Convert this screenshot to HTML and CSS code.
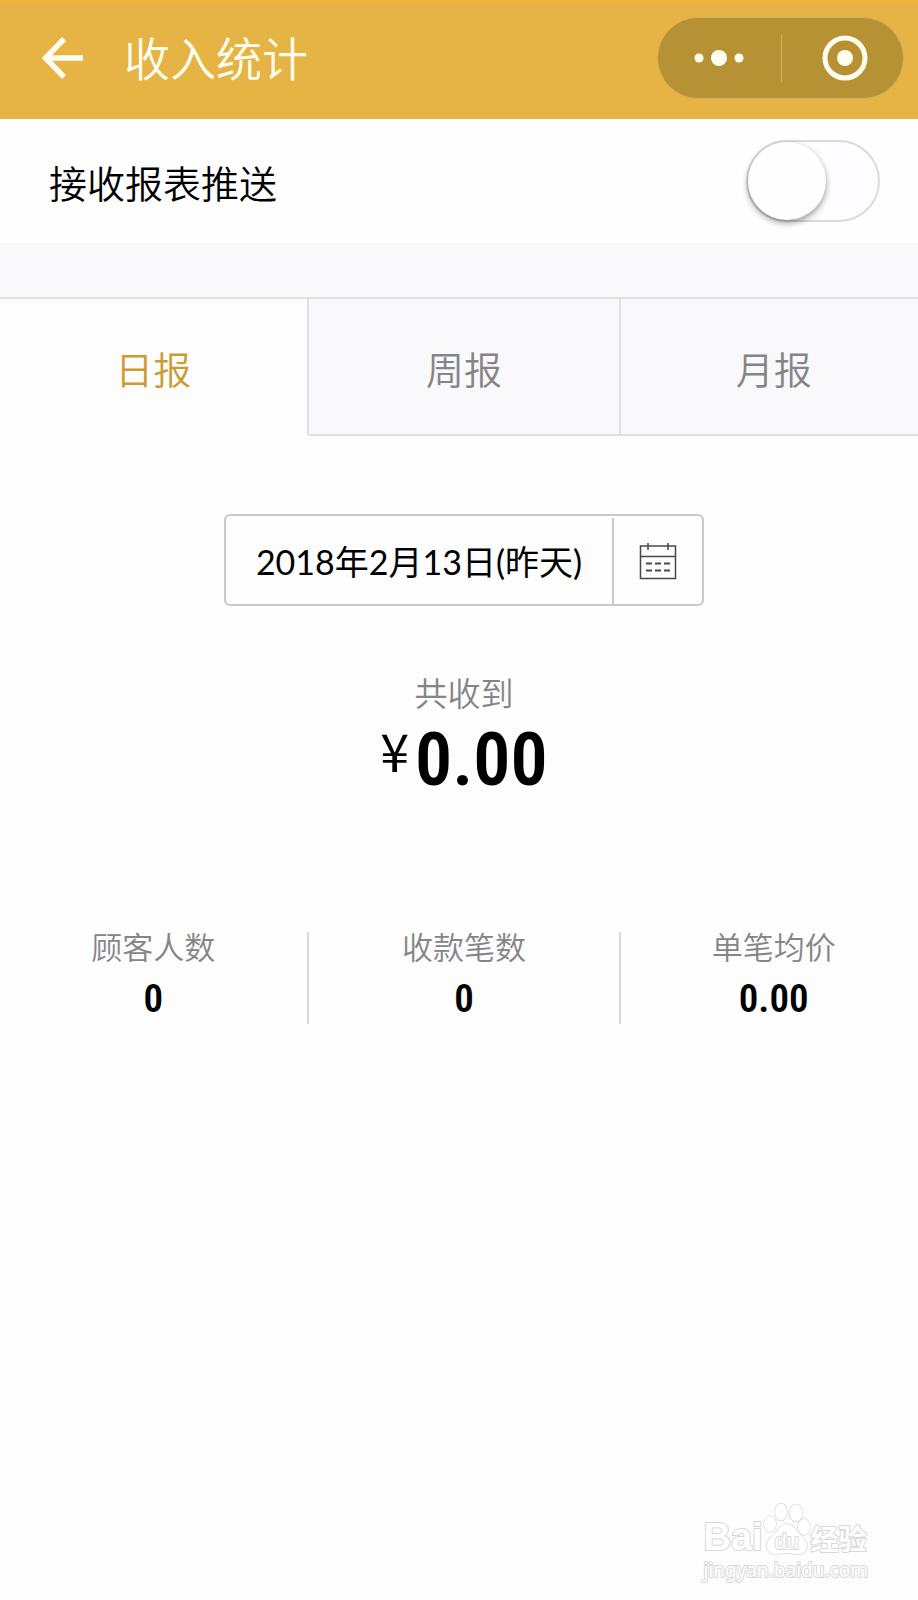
FILE: index.html
```
<!DOCTYPE html>
<html lang="zh-CN">
<head>
    <meta charset="UTF-8">
    <meta name="viewport" content="width=device-width, initial-scale=1.0">
    <title>收入统计</title>
    <link rel="stylesheet" href="styles.css">
</head>
<body>
    <header class="navbar">
        <button class="back" type="button" aria-label="返回">
            <svg width="42" height="42" viewBox="0 0 42 42" fill="none" stroke="#fffdf0" stroke-width="5.5">
                <path d="M22 2L3.500 21l18.500 19M3 21h38"/>
            </svg>
        </button>
        <h1>收入统计</h1>
        <div class="capsule">
            <button type="button" aria-label="更多">
                <svg width="50" height="18" viewBox="0 0 50 18" fill="#fffdf0">
                    <circle cx="5" cy="9" r="4.5"/>
                    <circle cx="25" cy="9" r="8"/>
                    <circle cx="45" cy="9" r="4.5"/>
                </svg>
            </button>
            <button type="button" aria-label="关闭">
                <svg width="46" height="46" viewBox="0 0 46 46">
                    <circle cx="23" cy="23" r="20" fill="none" stroke="#fffdf0" stroke-width="5"/>
                    <circle cx="23" cy="23" r="8" fill="#fffdf0"/>
                </svg>
            </button>
        </div>
    </header>

    <div class="push">
        <label for="pushSwitch">接收报表推送</label>
        <input type="checkbox" id="pushSwitch" class="switch">
    </div>

    <main class="report">
        <nav class="tabs">
            <button type="button" class="tab active">日报</button>
            <button type="button" class="tab">周报</button>
            <button type="button" class="tab">月报</button>
        </nav>

        <div class="datePicker">
            <input type="text" value="2018年2月13日(昨天)" aria-label="日期" readonly>
            <button type="button" aria-label="选择日期">
                <svg width="38" height="38" viewBox="0 0 38 38" fill="none" stroke="#48484c" stroke-width="1.5">
                    <path d="M1.500 4h35v32.500h-35zM1.500 14.500h35M9 1v7M29 1v7"/>
                    <path d="M7 21.500h6M16 21.500h6M25 21.500h6M7 28.500h6M16 28.500h6M25 28.500h6" stroke-width="2"/>
                </svg>
            </button>
        </div>

        <section class="total">
            <h2>共收到</h2>
            <p><span class="yen">¥</span><span class="amount">0.00</span></p>
        </section>

        <dl class="stats">
            <div>
                <dt>顾客人数</dt>
                <dd>0</dd>
            </div>
            <div>
                <dt>收款笔数</dt>
                <dd>0</dd>
            </div>
            <div>
                <dt>单笔均价</dt>
                <dd>0.00</dd>
            </div>
        </dl>
    </main>

    <div class="watermark">
        <div class="brand">
            <span class="bai">Bai</span>
            <span class="paw">
                <svg width="48" height="54" viewBox="0 0 48 54" fill="#fff" stroke="#d8d8d8" stroke-width="1.5">
                    <ellipse cx="7" cy="22" rx="6" ry="8"/>
                    <ellipse cx="18" cy="10" rx="6" ry="8.5"/>
                    <ellipse cx="33" cy="11" rx="6.5" ry="8.5"/>
                    <ellipse cx="41" cy="25" rx="6" ry="8"/>
                    <path d="M24 22c-5 0-8 4-11 8-4 5-10 8-9 15 1 6 6 8 11 7 6-1 12-1 18 0 6 1 11-2 11-8 0-6-5-9-9-14-3-4-6-8-11-8z"/>
                </svg>
                <span class="du">du</span>
            </span>
            <span class="exp">经验</span>
        </div>
        <div class="site">jingyan.baidu.com</div>
    </div>
</body>
</html>
```

FILE: styles.css
```
* {
    box-sizing: border-box;
}
body {
    font-family: Lato, "Noto Sans CJK SC", sans-serif;
    font-weight: 350;
    background-color: #fdfdfd;
    color: #000;
    min-height: 100vh;
    margin: 0;
    overflow-x: hidden;
    position: relative;
}
button {
    background: none;
    border: none;
    color: inherit;
    cursor: pointer;
    font: inherit;
    padding: 0;
}
svg {
    display: block;
}
h1, h2, p, dl, dd {
    font-weight: inherit;
    margin: 0;
}

/* top bar */
.navbar {
    background-color: #e6b445;
    border-top: 4px solid #f0b23c;
    color: #fffdf0;
    display: flex;
    align-items: center;
    height: 119px;
    padding: 0 14px 8px 42px;
}
.navbar h1 {
    font-size: 46px;
    line-height: 60px;
    margin-left: 40px;
    padding-top: 2px;
}
.capsule {
    background-color: #b79235;
    border: 1px solid #d3b062;
    border-radius: 41px;
    display: flex;
    align-items: center;
    height: 82px;
    margin-left: auto;
    width: 247px;
}
.capsule button {
    display: flex;
    align-items: center;
    justify-content: center;
    height: 48px;
    width: 50%;
}
.capsule button + button {
    border-left: 1px solid #cfae62;
    padding-left: 6px;
}

/* push switch */
.push {
    background-color: #fefefe;
    display: flex;
    align-items: center;
    justify-content: space-between;
    height: 124px;
    padding: 0 38px 0 49px;
}
.push label {
    font-size: 38px;
    line-height: 54px;
    padding-top: 4px;
}
.switch {
    appearance: none;
    background-color: #fdfcfe;
    border: 2px solid #dbdada;
    border-radius: 42px;
    cursor: pointer;
    height: 82px;
    margin: 0;
    width: 134px;
}
.switch::before {
    background-color: #fefefe;
    border-radius: 50%;
    box-shadow: 0 3px 6px rgba(0, 0, 0, 0.4);
    content: "";
    display: block;
    height: 78px;
    width: 78px;
}
.switch:checked {
    background-color: #e6b445;
}
.switch:checked::before {
    margin-left: auto;
}

/* report */
.report {
    width: calc(100% + 10px);
}
.tabs {
    background-color: #f9f8fb;
    display: grid;
    grid-template-columns: 309fr 313fr 307fr;
    padding-top: 54px;
}
.tab {
    border: 2px solid #e0dfe2;
    border-left: none;
    color: #858587;
    font-size: 38px;
    height: 139px;
    line-height: 54px;
    padding-top: 4px;
}
.tab.active {
    background-color: #fdfdfd;
    border-bottom-color: #fdfdfd;
    color: #cc9c31;
}
.datePicker {
    border: 2px solid #c9c8cb;
    border-radius: 6px;
    display: flex;
    height: 92px;
    margin: 78px auto 0;
    width: 480px;
}
.datePicker input {
    background: none;
    border: none;
    color: #000;
    flex: 1;
    font: inherit;
    font-size: 34px;
    font-weight: 400;
    min-width: 0;
    outline: none;
    padding: 0;
    text-align: center;
}
.datePicker button {
    border-left: 2px solid #c9c8cb;
    display: flex;
    align-items: center;
    justify-content: center;
    margin-top: 2px;
    width: 90px;
}
.total {
    margin-top: 64px;
    text-align: center;
}
.total h2 {
    color: #858587;
    font-size: 33px;
    line-height: 46px;
}
.total p {
    display: flex;
    align-items: flex-start;
    justify-content: center;
    gap: 6px;
}
.yen {
    font-family: "Noto Sans CJK SC", sans-serif;
    font-size: 52px;
    font-weight: 400;
    line-height: 68px;
}
.amount {
    font-family: "Roboto Condensed", Roboto, sans-serif;
    font-size: 74px;
    font-weight: 600;
    line-height: 88px;
}
.stats {
    display: grid;
    grid-template-columns: 309fr 313fr 307fr;
    margin-top: 128px;
    text-align: center;
}
.stats div {
    border-right: 2px solid #d9d8db;
    height: 92px;
}
.stats dt {
    color: #858587;
    font-size: 31px;
    line-height: 30px;
}
.stats dd {
    font-family: "Roboto Condensed", Roboto, sans-serif;
    font-size: 39px;
    font-weight: 600;
    line-height: 74px;
}

/* watermark */
.watermark {
    -webkit-text-stroke: 2px #d8d8d8;
    bottom: 16px;
    color: #fff;
    paint-order: stroke fill;
    position: absolute;
    right: 50px;
}
.brand {
    display: flex;
    align-items: flex-end;
    font-weight: 700;
}
.bai {
    font-family: "Liberation Sans", sans-serif;
    font-size: 38px;
    line-height: 38px;
}
.paw {
    position: relative;
}
.du {
    font-family: "Liberation Sans", sans-serif;
    font-size: 22px;
    font-weight: 400;
    left: 12px;
    line-height: 24px;
    position: absolute;
    top: 28px;
}
.exp {
    font-size: 28px;
    line-height: 34px;
}
.site {
    font-family: "Noto Sans", sans-serif;
    font-size: 19px;
    font-weight: 400;
    line-height: 28px;
}
```
